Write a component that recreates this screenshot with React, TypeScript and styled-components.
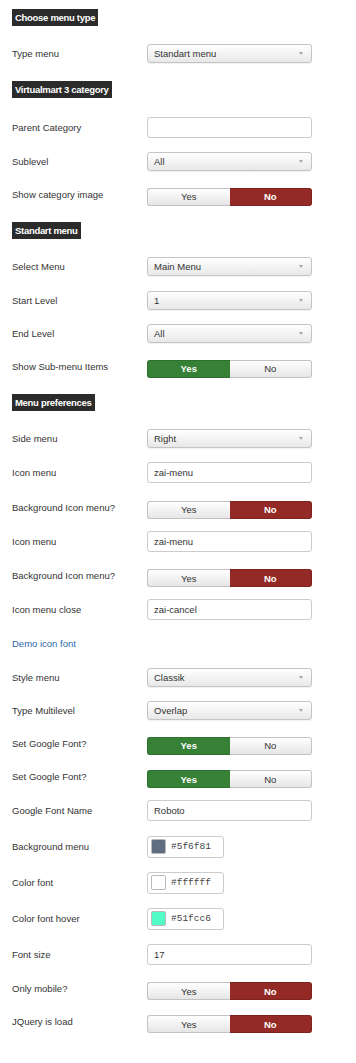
import { createGlobalStyle } from "styled-components";
import styled from "styled-components";

const GlobalStyle = createGlobalStyle`
    html, body {
        margin: 0;
        padding: 0;
        background: #ffffff;
    }
    body {
        font-family: "Liberation Sans", Arial, sans-serif;
        color: #333333;
    }
`;

type Field =
    | { kind: "heading"; text: string }
    | { kind: "select"; label: string; value: string }
    | { kind: "input"; label: string; value: string }
    | { kind: "toggle"; label: string; yes: boolean }
    | { kind: "color"; label: string; value: string }
    | { kind: "link"; label: string };

const fields: Field[] = [
    { kind: "heading", text: "Choose menu type" },
    { kind: "select", label: "Type menu", value: "Standart menu" },
    { kind: "heading", text: "Virtualmart 3 category" },
    { kind: "input", label: "Parent Category", value: "" },
    { kind: "select", label: "Sublevel", value: "All" },
    { kind: "toggle", label: "Show category image", yes: false },
    { kind: "heading", text: "Standart menu" },
    { kind: "select", label: "Select Menu", value: "Main Menu" },
    { kind: "select", label: "Start Level", value: "1" },
    { kind: "select", label: "End Level", value: "All" },
    { kind: "toggle", label: "Show Sub-menu Items", yes: true },
    { kind: "heading", text: "Menu preferences" },
    { kind: "select", label: "Side menu", value: "Right" },
    { kind: "input", label: "Icon menu", value: "zai-menu" },
    { kind: "toggle", label: "Background Icon menu?", yes: false },
    { kind: "input", label: "Icon menu", value: "zai-menu" },
    { kind: "toggle", label: "Background Icon menu?", yes: false },
    { kind: "input", label: "Icon menu close", value: "zai-cancel" },
    { kind: "link", label: "Demo icon font" },
    { kind: "select", label: "Style menu", value: "Classik" },
    { kind: "select", label: "Type Multilevel", value: "Overlap" },
    { kind: "toggle", label: "Set Google Font?", yes: true },
    { kind: "toggle", label: "Set Google Font?", yes: true },
    { kind: "input", label: "Google Font Name", value: "Roboto" },
    { kind: "color", label: "Background menu", value: "#5f6f81" },
    { kind: "color", label: "Color font", value: "#ffffff" },
    { kind: "color", label: "Color font hover", value: "#51fcc6" },
    { kind: "input", label: "Font size", value: "17" },
    { kind: "toggle", label: "Only mobile?", yes: false },
    { kind: "toggle", label: "JQuery is load", yes: false },
];

const Page = styled.div`
    display: flex;
    flex-direction: column;
    gap: 14.2px;
    padding: 5px 0 20px 12px;
    width: 344px;
    box-sizing: border-box;
`;

const Heading = styled.div`
    align-self: flex-start;
    margin: 4px 0;
    height: 17px;
    padding: 0 3px;
    display: flex;
    align-items: center;
    background: #2b2b2b;
    color: #ffffff;
    font-size: 9.5px;
    font-weight: bold;
    letter-spacing: -0.3px;
`;

const Row = styled.div`
    display: grid;
    grid-template-columns: 135px 165px;
    align-items: center;
`;

const Label = styled.div<{ $link?: boolean }>`
    font-size: 9.5px;
    color: ${(p) => (p.$link ? "#2c67ad" : "#333333")};
    line-height: 19px;
    white-space: nowrap;
`;

const SelectBox = styled.div`
    position: relative;
    height: 19px;
    box-sizing: border-box;
    border: 1px solid #c4c4c4;
    border-radius: 3px;
    background: linear-gradient(#ffffff, #e8e8e8);
    box-shadow: 0 1px 1px rgba(0, 0, 0, 0.06);
    display: flex;
    align-items: center;
    padding-left: 6px;
    font-size: 9.5px;
    color: #333333;
`;

const Caret = styled.span`
    position: absolute;
    right: 8px;
    top: 7px;
    width: 0;
    height: 0;
    border-left: 2.5px solid transparent;
    border-right: 2.5px solid transparent;
    border-top: 3px solid #a8a8a8;
`;

const TextBox = styled.div`
    height: 21px;
    box-sizing: border-box;
    border: 1px solid #cccccc;
    border-radius: 3px;
    background: #ffffff;
    display: flex;
    align-items: center;
    padding-left: 6px;
    font-size: 9.5px;
    color: #333333;
`;

const Toggle = styled.div`
    display: flex;
    height: 18px;
    margin: 3px 0 -2px;
`;

const ToggleBtn = styled.div<{ $on: boolean; $tone: "green" | "red"; $side: "left" | "right" }>`
    flex: 1;
    box-sizing: border-box;
    display: flex;
    align-items: center;
    justify-content: center;
    font-size: 9.5px;
    border: 1px solid ${(p) => (p.$on ? (p.$tone === "green" ? "#2f6f2f" : "#7f231f") : "#c2c2c2")};
    border-radius: ${(p) => (p.$side === "left" ? "3px 0 0 3px" : "0 3px 3px 0")};
    background: ${(p) =>
        p.$on
            ? p.$tone === "green"
                ? "#378137"
                : "#942a25"
            : "linear-gradient(#ffffff, #e6e6e6)"};
    color: ${(p) => (p.$on ? "#ffffff" : "#333333")};
    font-weight: ${(p) => (p.$on ? "bold" : "normal")};
    ${(p) => (p.$side === "left" ? "border-right: none;" : "border-left: none;")}
`;

const ColorBox = styled.div`
    width: 77px;
    height: 22px;
    box-sizing: border-box;
    border: 1px solid #cccccc;
    border-radius: 3px;
    display: flex;
    align-items: center;
    gap: 5px;
    padding-left: 3px;
`;

const Swatch = styled.span`
    width: 15px;
    height: 15px;
    box-sizing: border-box;
    border: 1px solid #b9b9b9;
    border-radius: 2px;
`;

const Hex = styled.span`
    font-family: "Liberation Mono", "Courier New", monospace;
    font-size: 9.5px;
    color: #444444;
`;

const renderControl = (f: Field) => {
    switch (f.kind) {
        case "select":
            return (
                <SelectBox>
                    {f.value}
                    <Caret />
                </SelectBox>
            );
        case "input":
            return <TextBox>{f.value}</TextBox>;
        case "toggle":
            return (
                <Toggle>
                    <ToggleBtn $on={f.yes} $tone="green" $side="left">
                        Yes
                    </ToggleBtn>
                    <ToggleBtn $on={!f.yes} $tone="red" $side="right">
                        No
                    </ToggleBtn>
                </Toggle>
            );
        case "color":
            return (
                <ColorBox>
                    <Swatch style={{ background: f.value }} />
                    <Hex>{f.value}</Hex>
                </ColorBox>
            );
        default:
            return null;
    }
};

export default function App() {
    return (
        <>
            <GlobalStyle />
            <Page>
                {fields.map((f, i) =>
                    f.kind === "heading" ? (
                        <Heading key={i}>{f.text}</Heading>
                    ) : (
                        <Row key={i}>
                            <Label $link={f.kind === "link"}>{f.label}</Label>
                            {renderControl(f)}
                        </Row>
                    )
                )}
            </Page>
        </>
    );
}
